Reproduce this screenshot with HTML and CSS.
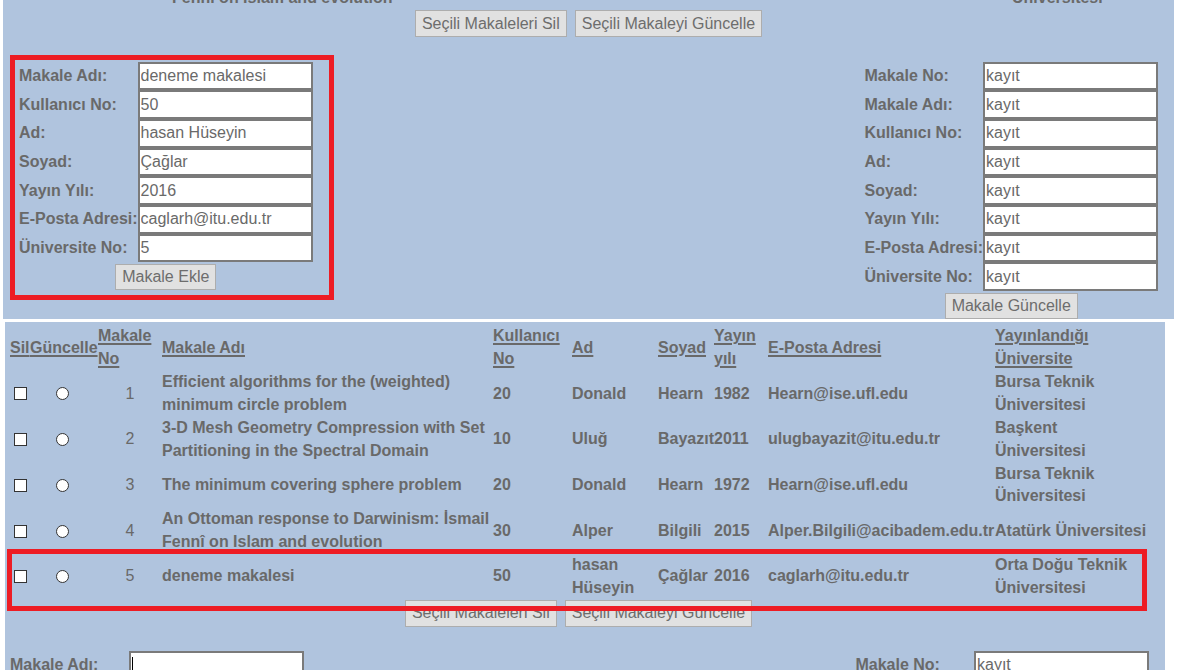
FILE: index.html
```html
<!DOCTYPE html>
<html lang="tr">
<head>
<meta charset="utf-8">
<title>Makaleler</title>
<link rel="stylesheet" href="styles.css">
</head>
<body>
<section class="panel panel-prev">
  <div class="cut-row"><span>Fenni on Islam and evolution</span><span>Üniversitesi</span></div>
  <div class="actions">
    <button class="btn" type="button">Seçili Makaleleri Sil</button>
    <button class="btn" type="button">Seçili Makaleyi Güncelle</button>
  </div>
  <div class="forms">
    <form class="entry">
      <div class="fields">
        <label>Makale Adı:</label><input class="field" type="text" value="deneme makalesi">
        <label>Kullanıcı No:</label><input class="field" type="text" value="50">
        <label>Ad:</label><input class="field" type="text" value="hasan Hüseyin">
        <label>Soyad:</label><input class="field" type="text" value="Çağlar">
        <label>Yayın Yılı:</label><input class="field" type="text" value="2016">
        <label>E-Posta Adresi:</label><input class="field" type="text" value="caglarh@itu.edu.tr">
        <label>Üniversite No:</label><input class="field" type="text" value="5">
      </div>
      <div class="form-foot"><button class="btn btn-form" type="button">Makale Ekle</button></div>
    </form>
    <form class="entry">
      <div class="fields">
        <label>Makale No:</label><input class="field" type="text" value="kayıt">
        <label>Makale Adı:</label><input class="field" type="text" value="kayıt">
        <label>Kullanıcı No:</label><input class="field" type="text" value="kayıt">
        <label>Ad:</label><input class="field" type="text" value="kayıt">
        <label>Soyad:</label><input class="field" type="text" value="kayıt">
        <label>Yayın Yılı:</label><input class="field" type="text" value="kayıt">
        <label>E-Posta Adresi:</label><input class="field" type="text" value="kayıt">
        <label>Üniversite No:</label><input class="field" type="text" value="kayıt">
      </div>
      <div class="form-foot"><button class="btn btn-form" type="button">Makale Güncelle</button></div>
    </form>
  </div>
</section>

<section class="panel panel-cur">
  <table class="grid">
    <colgroup>
      <col class="c-sil"><col class="c-upd"><col class="c-no"><col class="c-title"><col class="c-user">
      <col class="c-ad"><col class="c-soyad"><col class="c-year"><col class="c-mail"><col class="c-uni">
    </colgroup>
    <thead>
      <tr>
        <th><a href="#">Sil</a></th>
        <th><a href="#">Güncelle</a></th>
        <th><a href="#">Makale No</a></th>
        <th><a href="#">Makale Adı</a></th>
        <th><a href="#">Kullanıcı No</a></th>
        <th><a href="#">Ad</a></th>
        <th><a href="#">Soyad</a></th>
        <th><a href="#">Yayın yılı</a></th>
        <th><a href="#">E-Posta Adresi</a></th>
        <th><a href="#">Yayınlandığı Üniversite</a></th>
      </tr>
    </thead>
    <tbody>
      <tr>
        <td><input class="chk" type="checkbox"></td>
        <td><input class="rad" type="radio" name="sec"></td>
        <td class="no">1</td>
        <td>Efficient algorithms for the (weighted) minimum circle problem</td>
        <td>20</td><td>Donald</td><td>Hearn</td><td>1982</td>
        <td>Hearn@ise.ufl.edu</td><td>Bursa Teknik Üniversitesi</td>
      </tr>
      <tr>
        <td><input class="chk" type="checkbox"></td>
        <td><input class="rad" type="radio" name="sec"></td>
        <td class="no">2</td>
        <td>3-D Mesh Geometry Compression with Set Partitioning in the Spectral Domain</td>
        <td>10</td><td>Uluğ</td><td>Bayazıt</td><td>2011</td>
        <td>ulugbayazit@itu.edu.tr</td><td>Başkent Üniversitesi</td>
      </tr>
      <tr>
        <td><input class="chk" type="checkbox"></td>
        <td><input class="rad" type="radio" name="sec"></td>
        <td class="no">3</td>
        <td>The minimum covering sphere problem</td>
        <td>20</td><td>Donald</td><td>Hearn</td><td>1972</td>
        <td>Hearn@ise.ufl.edu</td><td>Bursa Teknik Üniversitesi</td>
      </tr>
      <tr>
        <td><input class="chk" type="checkbox"></td>
        <td><input class="rad" type="radio" name="sec"></td>
        <td class="no">4</td>
        <td>An Ottoman response to Darwinism: İsmail Fennî on Islam and evolution</td>
        <td>30</td><td>Alper</td><td>Bilgili</td><td>2015</td>
        <td>Alper.Bilgili@acibadem.edu.tr</td><td>Atatürk Üniversitesi</td>
      </tr>
      <tr>
        <td><input class="chk" type="checkbox"></td>
        <td><input class="rad" type="radio" name="sec"></td>
        <td class="no">5</td>
        <td>deneme makalesi</td>
        <td>50</td><td>hasan Hüseyin</td><td>Çağlar</td><td>2016</td>
        <td>caglarh@itu.edu.tr</td><td>Orta Doğu Teknik Üniversitesi</td>
      </tr>
    </tbody>
  </table>
  <div class="actions">
    <button class="btn" type="button">Seçili Makaleleri Sil</button>
    <button class="btn" type="button">Seçili Makaleyi Güncelle</button>
  </div>
  <div class="forms">
    <form class="entry">
      <div class="fields">
        <label>Makale Adı:</label><span class="caret-wrap"><input class="field" type="text"></span>
        <label>Kullanıcı No:</label><input class="field" type="text">
        <label>Ad:</label><input class="field" type="text">
        <label>Soyad:</label><input class="field" type="text">
        <label>Yayın Yılı:</label><input class="field" type="text">
        <label>E-Posta Adresi:</label><input class="field" type="text">
        <label>Üniversite No:</label><input class="field" type="text">
      </div>
      <div class="form-foot"><button class="btn btn-form" type="button">Makale Ekle</button></div>
    </form>
    <form class="entry">
      <div class="fields">
        <label>Makale No:</label><input class="field" type="text" value="kayıt">
        <label>Makale Adı:</label><input class="field" type="text" value="kayıt">
        <label>Kullanıcı No:</label><input class="field" type="text" value="kayıt">
        <label>Ad:</label><input class="field" type="text" value="kayıt">
        <label>Soyad:</label><input class="field" type="text" value="kayıt">
        <label>Yayın Yılı:</label><input class="field" type="text" value="kayıt">
        <label>E-Posta Adresi:</label><input class="field" type="text" value="kayıt">
        <label>Üniversite No:</label><input class="field" type="text" value="kayıt">
      </div>
      <div class="form-foot"><button class="btn btn-form" type="button">Makale Güncelle</button></div>
    </form>
  </div>
</section>

<div class="mark mark-add"></div>
<div class="mark mark-row"></div>
</body>
</html>
```

FILE: styles.css
```css
* { box-sizing: border-box; }

html {
  overflow: hidden;
}

html, body {
  margin: 0;
  padding: 0;
}

body {
  position: relative;
  background: #ffffff;
  font-family: "Liberation Sans", Arial, sans-serif;
  font-size: 16px;
  color: #696969;
}

.panel {
  background: #b0c4de;
}

.panel-prev {
  margin-left: 3px;
  width: 1171px;
  overflow: hidden;
  padding-bottom: 0.5px;
}

.panel-cur {
  margin: 3px 0 0 5px;
  width: 1160px;
  padding-top: 3px;
  min-height: 420px;
}

.cut-row {
  margin-top: -12.85px;
  line-height: 22.85px;
  font-weight: bold;
  display: grid;
  grid-template-columns: 840px auto;
  padding-left: 169px;
}

.actions {
  display: flex;
  justify-content: center;
  gap: 8px;
}

.panel-cur .actions {
  width: 1137px;
  margin: 0 0 0 5px;
}

.btn {
  font-family: "Liberation Sans", Arial, sans-serif;
  font-size: 16px;
  color: #6d6d6d;
  background: #e1e1e1;
  border: 1px solid #adadad;
  border-radius: 0;
  padding: 0 6px;
  margin: 0;
  height: 27px;
}

.btn-form {
  height: 26px;
}

.forms {
  display: flex;
  justify-content: space-between;
  align-items: flex-start;
}

.panel-prev .forms {
  margin-top: 24.7px;
  padding: 0 16px;
}

.panel-cur .forms {
  margin-top: 24.3px;
  padding: 0 16px 0 5px;
}

.fields {
  display: grid;
  grid-template-columns: auto 175px;
  grid-auto-rows: 28.66px;
  align-items: center;
}

.fields label {
  font-weight: bold;
  white-space: nowrap;
}

.field {
  display: block;
  width: 175px;
  height: 28.66px;
  margin: 0;
  padding: 0 1px;
  border: 2px solid #7a7a7a;
  border-radius: 0;
  background: #ffffff;
  font-family: "Liberation Sans", Arial, sans-serif;
  font-size: 16px;
  color: #696969;
  outline: none;
}

.caret-wrap {
  position: relative;
  display: block;
}

.caret-wrap::after {
  content: "";
  position: absolute;
  left: 3px;
  top: 6px;
  width: 1px;
  height: 17px;
  background: #000000;
}

.form-foot {
  text-align: center;
  margin-top: 2px;
}

/* data table */
.grid {
  table-layout: fixed;
  width: 1137px;
  border-collapse: collapse;
  border-spacing: 0;
  margin-left: 5px;
  line-height: 22.85px;
}

.c-sil { width: 20px; }
.c-upd { width: 68px; }
.c-no { width: 64px; }
.c-title { width: 331px; }
.c-user { width: 79px; }
.c-ad { width: 86px; }
.c-soyad { width: 56px; }
.c-year { width: 54px; }
.c-mail { width: 227px; }
.c-uni { width: 152px; }

.grid th {
  padding: 0;
  text-align: left;
  font-weight: bold;
  vertical-align: middle;
  height: 45.7px;
}

.grid th a {
  color: inherit;
  text-decoration: underline;
  text-decoration-thickness: 2px;
  text-underline-offset: 2px;
}

.grid td {
  padding: 0;
  font-weight: bold;
  vertical-align: middle;
  height: 45.7px;
}

.grid td.no {
  font-weight: normal;
  text-align: center;
}

.chk, .rad {
  appearance: none;
  -webkit-appearance: none;
  display: block;
  width: 13px;
  height: 13px;
  margin: 0;
  border: 1px solid #333333;
  background: #ffffff;
}

.chk {
  margin: 0 auto;
}

.rad {
  border-radius: 50%;
  margin-left: 26px;
}

/* annotation marks */
.mark {
  position: absolute;
  border: 5px solid #ed1c24;
  pointer-events: none;
}

.mark-add {
  left: 10px;
  top: 55px;
  width: 324px;
  height: 245px;
}

.mark-row {
  left: 7px;
  top: 549px;
  width: 1140px;
  height: 62px;
}
```
